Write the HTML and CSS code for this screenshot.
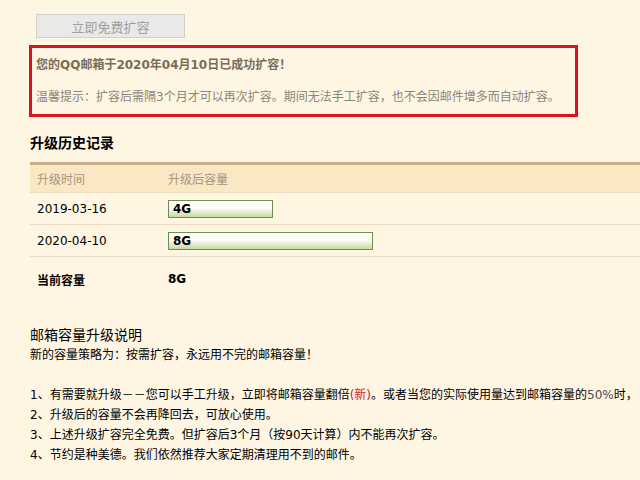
FILE: index.html
```html
<!DOCTYPE html>
<html lang="zh-CN">
<head>
    <meta charset="UTF-8">
    <title>邮箱容量</title>
    <link rel="stylesheet" href="styles.css">
</head>
<body>
    <div class="page">
        <button class="expand-btn" type="button" disabled>立即免费扩容</button>

        <!-- 扩容成功提示 -->
        <div class="notice">
            <p class="notice-title">您的QQ邮箱于2020年04月10日已成功扩容！</p>
            <p class="notice-tip">温馨提示：扩容后需隔3个月才可以再次扩容。期间无法手工扩容，也不会因邮件增多而自动扩容。</p>
        </div>

        <h2 class="section-title">升级历史记录</h2>
        <table class="history">
            <thead>
                <tr>
                    <th class="col-date">升级时间</th>
                    <th>升级后容量</th>
                </tr>
            </thead>
            <tbody>
                <tr>
                    <td>2019-03-16</td>
                    <td><div class="bar" style="width: 99px">4G</div></td>
                </tr>
                <tr>
                    <td>2020-04-10</td>
                    <td><div class="bar" style="width: 199px">8G</div></td>
                </tr>
                <tr class="current">
                    <td>当前容量</td>
                    <td>8G</td>
                </tr>
            </tbody>
        </table>

        <div class="help">
            <h3 class="help-title">邮箱容量升级说明</h3>
            <p>新的容量策略为：按需扩容，永远用不完的邮箱容量！</p>
            <ol class="help-list">
                <li>1、有需要就升级－－您可以手工升级，立即将邮箱容量翻倍<span class="new">(新)</span>。或者当您的实际使用量达到邮箱容量的<span class="num">50%</span>时，</li>
                <li>2、升级后的容量不会再降回去，可放心使用。</li>
                <li>3、上述升级扩容完全免费。但扩容后3个月（按90天计算）内不能再次扩容。</li>
                <li>4、节约是种美德。我们依然推荐大家定期清理用不到的邮件。</li>
            </ol>
        </div>
    </div>
</body>
</html>
```

FILE: styles.css
```css
body {
    margin: 0;
    background-color: #fef5e3;
    color: #000;
    font-family: "DejaVu Sans", "Noto Sans CJK SC", sans-serif;
    font-size: 12px;
    overflow: hidden;
}

.page {
    padding: 14px 0 0 30px;
}

.expand-btn {
    display: block;
    margin-left: 6px;
    width: 149px;
    height: 24px;
    padding: 0;
    background-color: #e9e9e7;
    border: 1px solid #cfcfcb;
    color: #a0a0a0;
    font-family: "Noto Sans CJK SC", sans-serif;
    font-size: 13px;
}

.notice {
    width: 539px;
    margin: 7px 0 0 -1px;
    border: 3px solid #d8141e;
    padding: 4px 0 0 4px;
    height: 62px;
}

.notice p {
    margin: 0;
    line-height: 20px;
}

.notice-title {
    font-weight: bold;
    color: #7a6c58;
    margin-top: 3px !important;
}

.notice-tip {
    color: #8b857a;
    margin-top: 12px !important;
}

.section-title {
    margin: 16px 0 0;
    font-size: 14px;
    line-height: 20px;
    font-weight: bold;
}

.history {
    width: 640px;
    margin-top: 9px;
    border-collapse: collapse;
    border-top: 3px solid #c9ad89;
}

.history th {
    height: 27px;
    padding: 0 0 0 7px;
    background-color: #fae8c5;
    color: #a3957c;
    font-weight: normal;
    text-align: left;
    border-bottom: 1px solid #ecdcc0;
}

.history .col-date {
    width: 124px;
}

.history td {
    height: 31px;
    padding: 0 0 0 7px;
    border-bottom: 1px solid #eadbc3;
}

.history td + td,
.history th + th {
    padding-left: 7px;
}

.history .current td {
    height: 44px;
    border-bottom: none;
    font-weight: bold;
}

.bar {
    height: 16px;
    line-height: 16px;
    padding-left: 4px;
    border: 1px solid #6f8d52;
    background: linear-gradient(to bottom, #ffffff 0%, #fbfcf6 45%, #c7daa3 100%);
    font-weight: bold;
}

.help {
    margin-top: 24px;
}

.help-title {
    margin: 0;
    font-size: 14px;
    font-weight: normal;
    line-height: 20px;
}

.help p {
    margin: 0;
    line-height: 20px;
}

.help-list {
    list-style: none;
    margin: 20px 0 0;
    padding: 0;
}

.help-list li {
    line-height: 20px;
    white-space: nowrap;
}

.help-list .new {
    color: #d0232b;
}

.help-list .num {
    color: #4a4a4a;
}
```
